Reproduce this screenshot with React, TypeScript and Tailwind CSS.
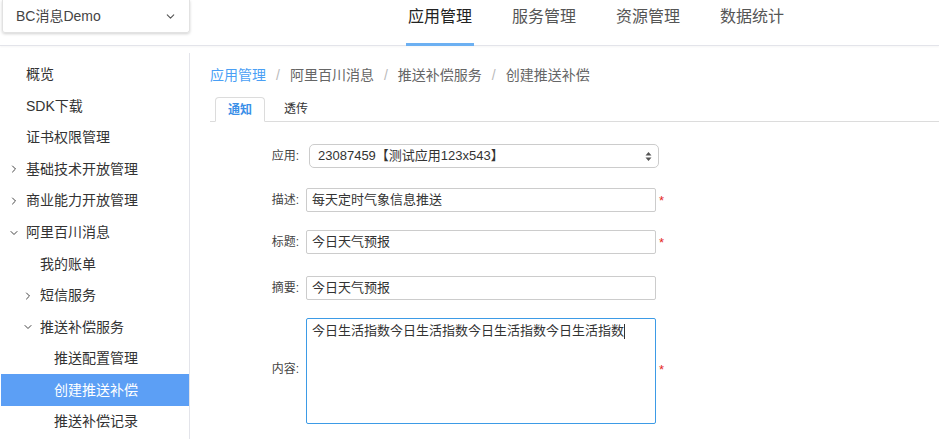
import { ChevronDown, ChevronRight } from "lucide-react";

const font = { fontFamily: '"Liberation Sans", "Noto Sans CJK SC", sans-serif' };

type Item = { label: string; level: 1 | 2 | 3; arrow?: "right" | "down"; active?: boolean };

const menu: Item[] = [
  { label: "概览", level: 1 },
  { label: "SDK下载", level: 1 },
  { label: "证书权限管理", level: 1 },
  { label: "基础技术开放管理", level: 1, arrow: "right" },
  { label: "商业能力开放管理", level: 1, arrow: "right" },
  { label: "阿里百川消息", level: 1, arrow: "down" },
  { label: "我的账单", level: 2 },
  { label: "短信服务", level: 2, arrow: "right" },
  { label: "推送补偿服务", level: 2, arrow: "down" },
  { label: "推送配置管理", level: 3 },
  { label: "创建推送补偿", level: 3, active: true },
  { label: "推送补偿记录", level: 3 },
];

const navs = ["应用管理", "服务管理", "资源管理", "数据统计"];

function Star({ className = "" }: { className?: string }) {
  return <span className={`w-[8px] pl-[3px] text-[13px] leading-none text-[#e5281e] ${className}`}>*</span>;
}

export default function App() {
  return (
    <div className="w-[939px] h-[439px] overflow-hidden bg-white text-[#333]" style={font}>
      <header className="h-[46px] flex border-b border-[#e3e4ea] shadow-[0_1px_2px_rgba(0,0,0,0.04)]">
        <div className="w-[188px] h-[33px] ml-[2px] flex items-center justify-between pl-[13px] pr-[12px] border border-[#e2e2e2] border-t-0 rounded-b-[3px] shadow-[0_1px_3px_rgba(0,0,0,0.18)]">
          <span className="text-[14px] text-[#444]">BC消息Demo</span>
          <ChevronDown size={13} strokeWidth={2} className="text-[#555]" />
        </div>
        <nav className="flex ml-[216px] gap-[36px]">
          {navs.map((n, i) => (
            <div
              key={n}
              className={`h-[46px] px-[2px] pt-[5px] text-[16px] border-b-[3px] -mb-px ${
                i === 0 ? "border-[#6cb0f2] text-[#222]" : "border-transparent text-[#555]"
              }`}
            >
              {n}
            </div>
          ))}
        </nav>
      </header>

      <div className="flex mt-[7px]">
        <aside className="w-[190px] h-[386px] border-r border-[#e3e4ea] pt-[6px]">
          {menu.map((m) => (
            <div
              key={m.label}
              className={`h-[31.55px] flex items-center text-[14px] ml-px ${
                m.active ? "bg-[#5c9ff5] text-white" : "text-[#333]"
              }`}
              style={{ paddingLeft: m.level === 1 ? 25 : m.level === 2 ? 39 : 53 }}
            >
              {m.arrow && (
                <span className="w-0 relative">
                  <span className="absolute -left-[18px] -top-[6px]">
                    {m.arrow === "right" ? (
                      <ChevronRight size={12} strokeWidth={2} className="text-[#444]" />
                    ) : (
                      <ChevronDown size={12} strokeWidth={2} className="text-[#444]" />
                    )}
                  </span>
                </span>
              )}
              {m.label}
            </div>
          ))}
        </aside>

        <main className="flex-1 pl-[20px] pt-[13px]">
          <div className="flex items-center text-[14px] text-[#666] h-[18px]">
            <span className="text-[#4a9ff5]">应用管理</span>
            <span className="mx-[10px] text-[#bbb]">/</span>
            <span>阿里百川消息</span>
            <span className="mx-[10px] text-[#bbb]">/</span>
            <span>推送补偿服务</span>
            <span className="mx-[10px] text-[#bbb]">/</span>
            <span>创建推送补偿</span>
          </div>

          <div className="mt-[13px] flex pl-[5px] border-b border-[#dcdcdc] h-[25px]">
            <div className="w-[50px] h-[25px] -mb-px flex items-center justify-center bg-white border border-[#dcdcdc] border-b-white rounded-t-[4px] text-[12px] font-bold text-[#3a8fe8]">
              通知
            </div>
            <div className="w-[62px] flex items-center justify-center text-[12px] text-[#333]">透传</div>
          </div>

          <div className="flex flex-col text-[12px] mt-[22px]">
            <div className="flex items-center h-[24px]">
              <label className="w-[89px] text-right text-[#444]">应用:</label>
              <div className="ml-[10px] w-[350px] h-[24px] flex items-center justify-between pl-[8px] pr-[6px] border border-[#ccc] rounded-[5px] text-[13px] text-[#333]">
                <span>23087459【测试应用123x543】</span>
                <svg width="7" height="11" viewBox="0 0 7 11">
                  <path d="M3.5 1 L6.5 4.5 H0.5 Z M3.5 10 L6.5 6.5 H0.5 Z" fill="#555" />
                </svg>
              </div>
            </div>

            {[
              { l: "描述:", v: "每天定时气象信息推送", req: true, mt: "mt-[20px]" },
              { l: "标题:", v: "今日天气预报", req: true, mt: "mt-[18px]" },
              { l: "摘要:", v: "今日天气预报", req: false, mt: "mt-[22px]" },
            ].map((f) => (
              <div key={f.l} className={`flex items-center h-[24px] ${f.mt}`}>
                <label className="w-[89px] text-right text-[#444]">{f.l}</label>
                <div className="ml-[7px] w-[350px] h-[24px] flex items-center px-[5px] border border-[#ccc] rounded-[2px] text-[13px] text-[#333]">
                  {f.v}
                </div>
                {f.req && <Star />}
              </div>
            ))}

            <div className="flex items-center mt-[18px]">
              <label className="w-[89px] text-right text-[#444] mb-[4px]">内容:</label>
              <div className="ml-[7px] w-[350px] h-[106px] px-[5px] pt-[2px] border border-[#3d9be6] rounded-[2px] text-[13px] text-[#333]">
                今日生活指数今日生活指数今日生活指数今日生活指数
                <span className="inline-block w-px h-[15px] bg-[#333] align-middle" />
              </div>
              <Star className="mb-[4px]" />
            </div>
          </div>
        </main>
      </div>
    </div>
  );
}
